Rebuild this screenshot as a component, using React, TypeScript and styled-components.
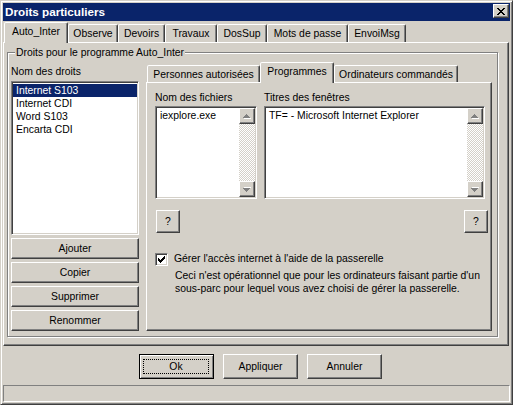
import styled, { createGlobalStyle, css } from "styled-components";

const FACE = "#d4d0c8";
const SHADOW = "#808080";
const DARK = "#404040";
const NAVY = "#0a246a";

const GlobalStyle = createGlobalStyle`
  html, body {
    margin: 0;
    padding: 0;
    background: ${FACE};
  }
  body {
    font-family: "Liberation Sans", Arial, sans-serif;
    font-size: 10.4px;
    line-height: 13px;
    color: #000;
  }
  *, *::before, *::after {
    box-sizing: border-box;
  }
`;

const raised = css`
  background: ${FACE};
  border: 1px solid;
  border-color: #fff ${DARK} ${DARK} #fff;
  box-shadow: inset -1px -1px ${SHADOW};
`;

const sunken = css`
  border: 1px solid;
  border-color: ${SHADOW} #fff #fff ${SHADOW};
  box-shadow: inset 1px 1px ${DARK}, inset -1px -1px ${FACE};
`;

const Window = styled.div`
  width: 513px;
  height: 405px;
  display: flex;
  flex-direction: column;
  padding: 2px;
  background: ${FACE};
  border: 1px solid;
  border-color: ${FACE} ${DARK} ${DARK} ${FACE};
  box-shadow: inset 1px 1px #fff, inset -1px -1px ${SHADOW};
`;

const TitleBar = styled.div`
  height: 18px;
  flex-shrink: 0;
  display: flex;
  align-items: flex-start;
  justify-content: space-between;
  padding: 0 1px 0 2px;
  margin-bottom: 1px;
  background: ${NAVY};
  color: #fff;
`;

const Caption = styled.span`
  font-weight: bold;
  font-size: 11.7px;
  line-height: 18px;
`;

const CloseButton = styled.div`
  ${raised};
  width: 16px;
  height: 14px;
  margin-top: 1px;
  display: flex;
  align-items: center;
  justify-content: center;
`;

const TabStrip = styled.div<{ $pad: number; $drop: number }>`
  --drop: ${(p) => p.$drop}px;
  height: 20px;
  flex-shrink: 0;
  display: flex;
  align-items: flex-end;
  padding-left: ${(p) => p.$pad}px;
`;

const Tab = styled.div<{ $w: number; $selected?: boolean }>`
  width: ${(p) => p.$w}px;
  height: ${(p) => (p.$selected ? "calc(100% + 1px)" : "calc(100% - var(--drop))")};
  margin-bottom: ${(p) => (p.$selected ? -1 : 0)}px;
  position: relative;
  z-index: ${(p) => (p.$selected ? 2 : 0)};
  padding-top: 2px;
  text-align: center;
  white-space: nowrap;
  background: ${FACE};
  border: 1px solid;
  border-bottom: none;
  border-color: #fff ${DARK} transparent #fff;
  border-radius: 2px 2px 0 0;
  box-shadow: inset -1px 0 ${SHADOW};
`;

const TabPanel = styled.div<{ $w: number; $h: number }>`
  width: ${(p) => p.$w}px;
  height: ${(p) => p.$h}px;
  flex-shrink: 0;
  background: ${FACE};
  border: 1px solid;
  border-color: #fff ${DARK} ${DARK} #fff;
  box-shadow: inset -1px -1px ${SHADOW};
`;

const OuterPanel = styled(TabPanel)`
  padding: 9px 10px 0 3px;
`;

const InnerPanel = styled(TabPanel)`
  padding: 8px 6px 0 8px;
`;

const GroupBox = styled.div`
  position: relative;
  padding: 9px 5px 5px 3px;
  border: 1px solid ${SHADOW};
  box-shadow: 1px 1px 0 #fff, inset 1px 1px 0 #fff;
`;

const GroupTitle = styled.span`
  position: absolute;
  top: -7px;
  left: 7px;
  padding: 0 1px;
  line-height: 13px;
  white-space: nowrap;
  background: ${FACE};
`;

const Columns = styled.div`
  display: flex;
  gap: 7px;
`;

const LeftColumn = styled.div`
  width: 128px;
  display: flex;
  flex-direction: column;
`;

const RightColumn = styled.div`
  width: 346px;
  display: flex;
  flex-direction: column;
`;

const FieldLabel = styled.div<{ $top?: number; $bottom: number }>`
  height: 13px;
  margin-top: ${(p) => p.$top ?? 0}px;
  margin-bottom: ${(p) => p.$bottom}px;
  white-space: nowrap;
`;

const ListBox = styled.div<{ $h: number }>`
  ${sunken};
  height: ${(p) => p.$h}px;
  padding: 1px;
  display: flex;
  background: #fff;
`;

const Items = styled.div`
  flex: 1;
  min-width: 0;
  padding-top: 1px;
`;

const Item = styled.div<{ $selected?: boolean }>`
  height: 13px;
  padding-left: 3px;
  white-space: nowrap;
  background: ${(p) => (p.$selected ? NAVY : "transparent")};
  color: ${(p) => (p.$selected ? "#fff" : "#000")};
`;

const ScrollBar = styled.div`
  width: 16px;
  display: flex;
  flex-direction: column;
`;

const ScrollButton = styled.div`
  ${raised};
  height: 16px;
  flex-shrink: 0;
  display: flex;
  align-items: center;
  justify-content: center;
`;

const ScrollTrack = styled.div`
  flex: 1;
  background-color: ${FACE};
  background-image: repeating-conic-gradient(#fff 0 25%, ${FACE} 0 50%);
  background-size: 2px 2px;
`;

const ButtonStack = styled.div`
  display: flex;
  flex-direction: column;
  gap: 3px;
  margin-top: 3px;
`;

const Button = styled.button<{ $w?: number; $h: number }>`
  ${raised};
  width: ${(p) => (p.$w ? `${p.$w}px` : "100%")};
  height: ${(p) => p.$h}px;
  margin: 0;
  padding: 0;
  flex-shrink: 0;
  display: flex;
  align-items: center;
  justify-content: center;
  font: inherit;
  color: #000;
  cursor: default;
`;

const DefaultButton = styled(Button)`
  border-color: #000;
  box-shadow: inset 1px 1px #fff, inset -1px -1px ${SHADOW};
`;

const FocusRect = styled.span`
  width: calc(100% - 7px);
  height: calc(100% - 8px);
  margin-right: 1px;
  border: 1px dotted #000;
  display: flex;
  align-items: center;
  justify-content: center;
`;

const FieldsRow = styled.div`
  display: flex;
  gap: 7px;
`;

const Field = styled.div<{ $w: number }>`
  width: ${(p) => p.$w}px;
  display: flex;
  flex-direction: column;
`;

const HelpRow = styled.div`
  display: flex;
  justify-content: space-between;
  margin: 11px -3px 0 1px;
`;

const CheckRow = styled.div`
  display: flex;
  align-items: flex-start;
  gap: 6px;
  margin-top: 20px;
`;

const CheckBox = styled.div`
  ${sunken};
  width: 13px;
  height: 13px;
  flex-shrink: 0;
  display: flex;
  align-items: center;
  justify-content: center;
  background: #fff;
`;

const CheckLabel = styled.span`
  margin-top: -1px;
  white-space: nowrap;
`;

const Note = styled.div`
  margin: 3px 0 0 20px;
  white-space: nowrap;
`;

const ButtonRow = styled.div`
  display: flex;
  gap: 9px;
  margin-top: 8px;
  padding-left: 136px;
`;

const StatusBar = styled.div`
  height: 17px;
  flex-shrink: 0;
  margin-top: 6px;
  border: 1px solid;
  border-color: ${SHADOW} #fff #fff ${SHADOW};
`;

// 8x7 pixel cross of the title bar close button
const crossRows: [number, number][][] = [
  [[0, 2], [6, 2]],
  [[1, 2], [5, 2]],
  [[2, 4]],
  [[3, 2]],
  [[2, 4]],
  [[1, 2], [5, 2]],
  [[0, 2], [6, 2]],
];

const CloseIcon = () => (
  <svg width="8" height="7" shapeRendering="crispEdges">
    {crossRows.map((row, y) =>
      row.map(([x, w]) => <rect key={`${y}-${x}`} x={x} y={y} width={w} height={1} fill="#000" />)
    )}
  </svg>
);

// 7x7 pixel check mark
const checkRows: [number, number][] = [
  [6, 1],
  [5, 2],
  [0, 1],
  [0, 2],
  [0, 5],
  [1, 3],
  [2, 1],
];
const checkExtra: [number, number, number][] = [
  [2, 4, 3],
  [3, 3, 3],
];

const CheckIcon = () => (
  <svg width="7" height="7" shapeRendering="crispEdges">
    {checkRows.map(([x, w], y) => (
      <rect key={y} x={x} y={y} width={w} height={1} fill="#000" />
    ))}
    {checkExtra.map(([y, x, w]) => (
      <rect key={`e${y}`} x={x} y={y} width={w} height={1} fill="#000" />
    ))}
  </svg>
);

const arrowRows: [number, number][] = [
  [3, 1],
  [2, 3],
  [1, 5],
  [0, 7],
];

const Arrow = ({ down }: { down?: boolean }) => (
  <svg
    width="8"
    height="5"
    shapeRendering="crispEdges"
    style={down ? { transform: "scaleY(-1)" } : undefined}
  >
    {arrowRows.map(([x, w], y) => (
      <rect key={`s${y}`} x={x + 1} y={y + 1} width={w} height={1} fill="#fff" />
    ))}
    {arrowRows.map(([x, w], y) => (
      <rect key={y} x={x} y={y} width={w} height={1} fill={SHADOW} />
    ))}
  </svg>
);

const VScroll = () => (
  <ScrollBar>
    <ScrollButton>
      <Arrow />
    </ScrollButton>
    <ScrollTrack />
    <ScrollButton>
      <Arrow down />
    </ScrollButton>
  </ScrollBar>
);

const outerTabs = [
  { label: "Auto_Inter", w: 64 },
  { label: "Observe", w: 50 },
  { label: "Devoirs", w: 47 },
  { label: "Travaux", w: 52 },
  { label: "DosSup", w: 50 },
  { label: "Mots de passe", w: 81 },
  { label: "EnvoiMsg", w: 58 },
];

const innerTabs = [
  { label: "Personnes autorisées", w: 113 },
  { label: "Programmes", w: 74 },
  { label: "Ordinateurs commandés", w: 124 },
];

const rights = ["Internet S103", "Internet CDI", "Word S103", "Encarta CDI"];
const actions = ["Ajouter", "Copier", "Supprimer", "Renommer"];

export default function App() {
  return (
    <>
      <GlobalStyle />
      <Window>
        <TitleBar>
          <Caption>Droits particuliers</Caption>
          <CloseButton>
            <CloseIcon />
          </CloseButton>
        </TitleBar>

        <TabStrip $pad={1} $drop={2}>
          {outerTabs.map((t, i) => (
            <Tab key={t.label} $w={t.w} $selected={i === 0}>
              {t.label}
            </Tab>
          ))}
        </TabStrip>

        <OuterPanel $w={506} $h={304}>
          <GroupBox>
            <GroupTitle>Droits pour le programme Auto_Inter</GroupTitle>
            <Columns>
              <LeftColumn>
                <FieldLabel $top={3} $bottom={3}>
                  Nom des droits
                </FieldLabel>
                <ListBox $h={154}>
                  <Items>
                    {rights.map((r, i) => (
                      <Item key={r} $selected={i === 0}>
                        {r}
                      </Item>
                    ))}
                  </Items>
                </ListBox>
                <ButtonStack>
                  {actions.map((a) => (
                    <Button key={a} $h={21}>
                      {a}
                    </Button>
                  ))}
                </ButtonStack>
              </LeftColumn>

              <RightColumn>
                <TabStrip $pad={1} $drop={3}>
                  {innerTabs.map((t, i) => (
                    <Tab key={t.label} $w={t.w} $selected={i === 1}>
                      {t.label}
                    </Tab>
                  ))}
                </TabStrip>
                <InnerPanel $w={346} $h={249}>
                  <FieldsRow>
                    <Field $w={102}>
                      <FieldLabel $bottom={2}>Nom des fichiers</FieldLabel>
                      <ListBox $h={93}>
                        <Items>
                          <Item>iexplore.exe</Item>
                        </Items>
                        <VScroll />
                      </ListBox>
                    </Field>
                    <Field $w={221}>
                      <FieldLabel $bottom={2}>Titres des fenêtres</FieldLabel>
                      <ListBox $h={93}>
                        <Items>
                          <Item>TF= - Microsoft Internet Explorer</Item>
                        </Items>
                        <VScroll />
                      </ListBox>
                    </Field>
                  </FieldsRow>
                  <HelpRow>
                    <Button $w={24} $h={23}>?</Button>
                    <Button $w={24} $h={23}>?</Button>
                  </HelpRow>
                  <CheckRow>
                    <CheckBox>
                      <CheckIcon />
                    </CheckBox>
                    <CheckLabel>Gérer l'accès internet à l'aide de la passerelle</CheckLabel>
                  </CheckRow>
                  <Note>
                    Ceci n'est opérationnel que pour les ordinateurs faisant partie d'un
                    <br />
                    sous-parc pour lequel vous avez choisi de gérer la passerelle.
                  </Note>
                </InnerPanel>
              </RightColumn>
            </Columns>
          </GroupBox>
        </OuterPanel>

        <ButtonRow>
          <DefaultButton $w={75} $h={25}>
            <FocusRect>Ok</FocusRect>
          </DefaultButton>
          <Button $w={75} $h={25}>Appliquer</Button>
          <Button $w={75} $h={25}>Annuler</Button>
        </ButtonRow>

        <StatusBar />
      </Window>
    </>
  );
}
